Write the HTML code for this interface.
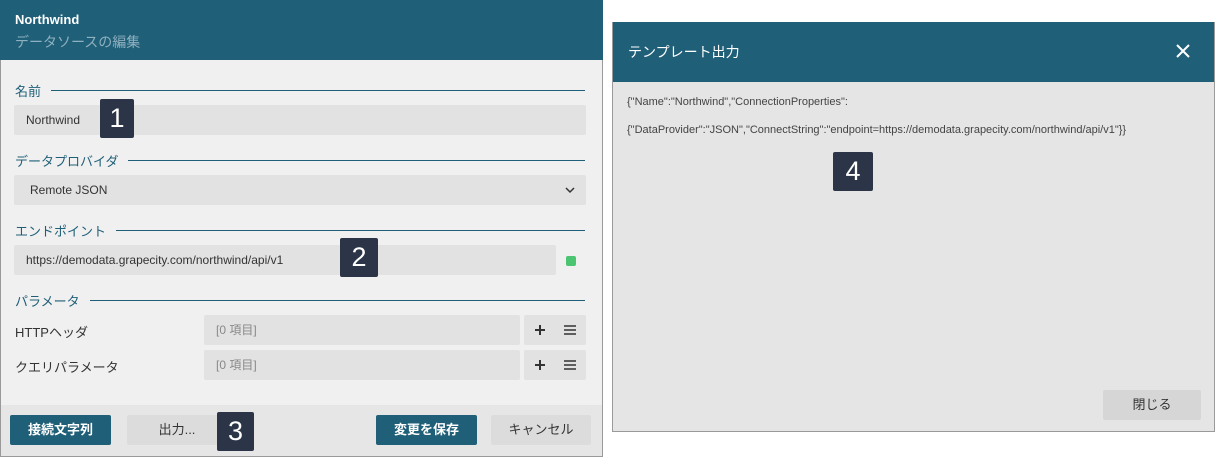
<!DOCTYPE html>
<html><head><meta charset="utf-8"><style>
*{box-sizing:border-box;margin:0;padding:0}
body{width:1216px;height:457px;background:#fff;font-family:"Liberation Sans","Noto Sans CJK JP",sans-serif;position:relative;overflow:hidden;color:#333}
.a{position:absolute}
.dlg{left:0;top:0;width:603px;height:457px;background:#f0f0f0;border:1px solid #9a9a9a;border-top:none}
.hd{left:0;top:0;width:603px;height:60px;background:#1f5f78}
.sec{display:flex;align-items:center;left:15px;width:570px;height:18px}
.sec span{font-size:13px;color:#1f5f78;white-space:nowrap;margin-right:10px}
.sec i{flex:1;height:1px;background:#1f5f78;display:block}
.inp{background:#e2e2e2;border-radius:2px;font-size:12px;color:#333;padding-left:12px;line-height:30px}
.badge{background:#2b3547;color:#fff;font-size:27px;text-align:center;border-radius:2px}
.btn{font-size:13px;text-align:center;line-height:30px;border-radius:2px}
</style></head><body>
<div class="a dlg"></div>
<div class="a hd"></div>
<div class="a" style="left:15px;top:12px;color:#fff;font-size:13px;font-weight:bold">Northwind</div>
<div class="a" style="left:15px;top:32px;color:#8fb0bf;font-size:14px">データソースの編集</div>

<div class="a sec" style="top:81px"><span>名前</span><i></i></div>
<div class="a inp" style="left:14px;top:105px;width:572px;height:30px">Northwind</div>

<div class="a sec" style="top:151px"><span>データプロバイダ</span><i></i></div>
<div class="a inp" style="left:14px;top:175px;width:572px;height:30px;padding-left:16px">Remote JSON</div>
<svg class="a" style="left:565px;top:186px" width="10" height="8"><path d="M1 2 L5 6 L9 2" stroke="#333" stroke-width="1.5" fill="none"/></svg>

<div class="a sec" style="top:221px"><span>エンドポイント</span><i></i></div>
<div class="a inp" style="left:14px;top:245px;width:542px;height:30px">https://demodata.grapecity.com/northwind/api/v1</div>
<div class="a" style="left:566px;top:256px;width:10px;height:10px;background:#4cc572;border-radius:2px"></div>

<div class="a sec" style="top:291px"><span>パラメータ</span><i></i></div>
<div class="a" style="left:15px;top:322px;font-size:13px">HTTPヘッダ</div>
<div class="a inp" style="left:204px;top:315px;width:316px;height:30px;color:#888">[0 項目]</div>
<div class="a" style="left:524px;top:315px;width:62px;height:30px;background:#e2e2e2;border-radius:2px"></div>
<svg class="a" style="left:534px;top:324px" width="12" height="12"><path d="M6 1V11M1 6H11" stroke="#333" stroke-width="2"/></svg>
<svg class="a" style="left:563px;top:324px" width="14" height="12"><path d="M1 2H13M1 6H13M1 10H13" stroke="#333" stroke-width="1.6"/></svg>
<div class="a" style="left:15px;top:357px;font-size:13px">クエリパラメータ</div>
<div class="a inp" style="left:204px;top:350px;width:316px;height:30px;color:#888">[0 項目]</div>
<div class="a" style="left:524px;top:350px;width:62px;height:30px;background:#e2e2e2;border-radius:2px"></div>
<svg class="a" style="left:534px;top:359px" width="12" height="12"><path d="M6 1V11M1 6H11" stroke="#333" stroke-width="2"/></svg>
<svg class="a" style="left:563px;top:359px" width="14" height="12"><path d="M1 2H13M1 6H13M1 10H13" stroke="#333" stroke-width="1.6"/></svg>

<div class="a" style="left:1px;top:405px;width:601px;height:51px;background:#e6e6e6"></div>
<div class="a btn" style="left:10px;top:415px;width:101px;height:30px;background:#1f5f78;color:#fff;font-weight:bold">接続文字列</div>
<div class="a btn" style="left:127px;top:415px;width:100px;height:30px;background:#dcdcdc">出力...</div>
<div class="a btn" style="left:376px;top:415px;width:101px;height:30px;background:#1f5f78;color:#fff;font-weight:bold">変更を保存</div>
<div class="a btn" style="left:491px;top:415px;width:100px;height:30px;background:#dcdcdc">キャンセル</div>

<div class="a" style="left:612px;top:22px;width:603px;height:410px;background:#e5e5e5;border:1px solid #9a9a9a"></div>
<div class="a" style="left:613px;top:22px;width:601px;height:60px;background:#1f5f78"></div>
<div class="a" style="left:628px;top:42px;color:#fff;font-size:14px">テンプレート出力</div>
<svg class="a" style="left:1176px;top:44px" width="14" height="14"><path d="M1 1L13 13M13 1L1 13" stroke="#fff" stroke-width="2"/></svg>
<div class="a" style="left:627px;top:96px;font-size:11px;color:#444">{"Name":"Northwind","ConnectionProperties":</div>
<div class="a" style="left:627px;top:124px;font-size:11px;color:#444">{"DataProvider":"JSON","ConnectString":"endpoint=https://demodata.grapecity.com/northwind/api/v1"}}</div>
<div class="a btn" style="left:1103px;top:390px;width:98px;height:30px;background:#d6d6d6">閉じる</div>

<div class="a badge" style="left:100px;top:99px;width:34px;height:39px;line-height:39px">1</div>
<div class="a badge" style="left:340px;top:238px;width:38px;height:39px;line-height:39px">2</div>
<div class="a badge" style="left:217px;top:412px;width:37px;height:39px;line-height:39px">3</div>
<div class="a badge" style="left:833px;top:152px;width:40px;height:39px;line-height:39px">4</div>
</body></html>
